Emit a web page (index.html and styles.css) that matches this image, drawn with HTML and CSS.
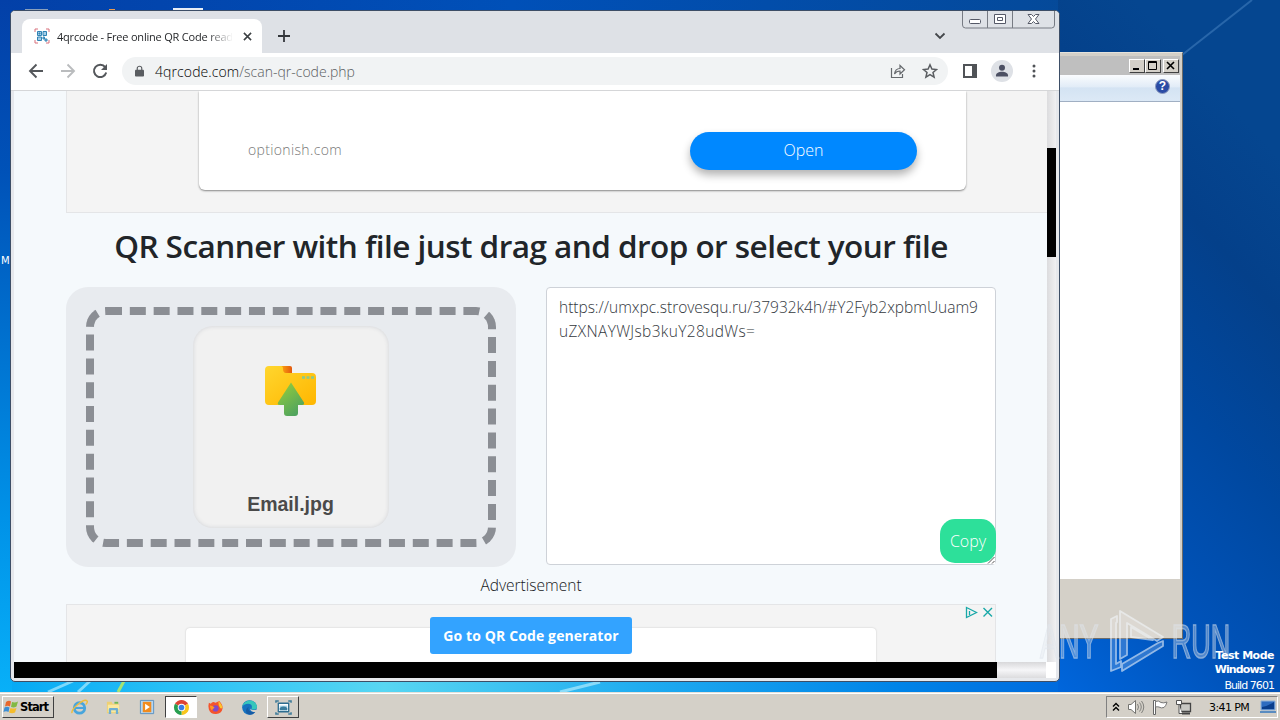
FILE: index.html
```
<!DOCTYPE html>
<html>
  <head>
    <meta charset="UTF-8" />
    <title>4qrcode</title>
    <link rel="stylesheet" href="styles.css">
  </head>
  <body>
    <div id="desktop">
      <svg class="wallpaper" viewBox="0 0 1280 720">
        <defs>
          <linearGradient id="floor">
            <stop offset="0" stop-color="#04a8f4" />
            <stop offset="0.15" stop-color="#2cc2f6" />
            <stop offset="0.3" stop-color="#58d6f2" />
            <stop offset="0.5" stop-color="#20acf0" />
            <stop offset="0.7" stop-color="#0084e8" />
            <stop offset="0.85" stop-color="#0066dc" />
            <stop offset="1" stop-color="#0050bc" />
          </linearGradient>
          <linearGradient id="left_side" x1="0" y1="0" x2="0" y2="1">
            <stop offset="0" stop-color="#0340a8" />
            <stop offset="0.25" stop-color="#0052b8" />
            <stop offset="0.5" stop-color="#0072d0" />
            <stop offset="0.75" stop-color="#0092e8" />
            <stop offset="1" stop-color="#08b0f8" />
          </linearGradient>
          <linearGradient id="top_side">
            <stop offset="0" stop-color="#0340a8" />
            <stop offset="0.4" stop-color="#0050b8" />
            <stop offset="0.8" stop-color="#044a9c" />
            <stop offset="1" stop-color="#0a4888" />
          </linearGradient>
          <linearGradient id="right_side" x1="0.35" y1="0" x2="0" y2="1">
            <stop offset="0" stop-color="#054690" />
            <stop offset="0.2" stop-color="#04408a" />
            <stop offset="0.45" stop-color="#0048a0" />
            <stop offset="0.75" stop-color="#0054bc" />
            <stop offset="1" stop-color="#0066dc" />
          </linearGradient>
        </defs>
        <rect width="1280" height="720" fill="url(#top_side)" />
        <rect y="600" width="1280" height="120" fill="url(#floor)" />
        <rect width="12" height="692" fill="url(#left_side)" />
        <rect x="1058" width="222" height="692" fill="url(#right_side)" />
        <path d="M1182 55L1252 0" stroke="#4b86c4" stroke-width="2" opacity="0.5" />
        <path d="M48 692l25-11M78 692l12-11M560 692l40-10" stroke="#c8f4ff" stroke-width="3" opacity="0.6" />
        <path d="M118 692l6-11" stroke="#a5e474" stroke-width="3" />
        <path d="M25 9.500h23" stroke="#8aa0bc" />
        <path d="M173 9h30" stroke="#e8eef6" stroke-width="2" />
        <path d="M109 9.500h6" stroke="#e89a50" />
      </svg>
      <div class="icon_label">M</div>

      <div class="window explorer">
        <div class="caption">
          <span class="caption_button"><svg viewBox="0 0 14 12"><path d="M3 9h6" stroke="#000" stroke-width="2" /></svg></span>
          <span class="caption_button"><svg viewBox="0 0 14 12"><path d="M2.500 1.500h8v8h-8zM2 2.500h9" fill="none" stroke="#000" /></svg></span>
          <span class="caption_button close"><svg viewBox="0 0 14 12"><path d="M3 2l7 7M10 2l-7 7" stroke="#000" stroke-width="1.600" /></svg></span>
        </div>
        <div class="commands"><span class="help">?</span></div>
        <div class="files"></div>
        <div class="details"></div>
      </div>

      <div class="window chrome">
        <div class="tabs">
          <div class="tab">
            <svg class="favicon" viewBox="0 0 16 16">
              <path d="M1 4V1h3M12 1h3v3M15 12v3h-3M4 15H1v-3" fill="none" stroke="#d8707c" />
              <path d="M3.500 3.500h4v4h-4zM9 3.500h3.500v4H9zM3.500 9h4v3.500h-4zM9 9h1.500v2H9zM11 11h2v2h-2zM5 5h1v1H5z" fill="#a5cce6" stroke="#2f83b4" />
            </svg>
            <span class="tab_title">4qrcode - Free online QR Code read</span>
            <svg class="tab_close" viewBox="0 0 10 10"><path d="M1 1l8 8M9 1l-8 8" stroke="#3c4043" stroke-width="1.700" /></svg>
          </div>
          <svg class="new_tab" viewBox="0 0 12 12"><path d="M6 0v12M0 6h12" stroke="#33363a" stroke-width="1.800" /></svg>
          <svg class="tab_search" viewBox="0 0 12 8"><path d="M1.500 1.500L6 6l4.500-4.500" fill="none" stroke="#44474b" stroke-width="1.800" /></svg>
          <svg class="window_buttons" viewBox="0 0 94 18">
            <path d="M.5 0v14q0 3 3 3h86q3 0 3-3V0M25.500 0v17M50.500 0v17" fill="none" stroke="#777b83" />
            <rect x="7.500" y="8.500" width="11" height="4" rx="1" fill="#fff" stroke="#555967" />
            <path d="M32.500 3.500h11v9h-11zM35.500 6.500h5v3h-5z" fill="#fff" stroke="#555967" />
            <path d="M66 3.500h3.500l2 2 2-2H77l-3.500 4.500 3.500 4.500h-3.500l-2-2-2 2H66l3.500-4.500z" fill="#fff" stroke="#555967" />
          </svg>
        </div>
        <div class="toolbar">
          <svg class="nav" viewBox="0 0 16 16"><path d="M15 8H2M8.500 1.500L2 8l6.500 6.500" fill="none" stroke="#54575b" stroke-width="1.900" /></svg>
          <svg class="nav" viewBox="0 0 16 16"><path d="M1 8h13M7.500 1.500L14 8l-6.500 6.500" fill="none" stroke="#babcbe" stroke-width="1.900" /></svg>
          <svg class="nav" viewBox="0 0 16 16"><path d="M13.200 4.200A6.200 6.200 0 1 0 14.200 9.500" fill="none" stroke="#54575b" stroke-width="2" /><path d="M15 1v6H9z" fill="#54575b" /></svg>
          <div class="omnibox">
            <svg class="lock" viewBox="0 0 10 12"><path d="M1 4.500h8q1 0 1 1V11q0 1-1 1H1q-1 0-1-1V5.500q0-1 1-1z" fill="#5a5d61" /><path d="M2.500 5V3a2.500 2.300 0 0 1 5 0v2" fill="none" stroke="#5a5d61" stroke-width="1.300" /></svg>
            <span class="url"><span class="host">4qrcode.com</span>/scan-qr-code.php</span>
            <svg class="share" viewBox="0 0 16 16"><path d="M1.500 5v9.500h11V11M4.500 11c.5-4 2.500-5.500 5.500-5.500V2.500l4.500 4.300L10 11V8c-2.500 0-4 .5-5.500 3z" fill="none" stroke="#66696d" stroke-width="1.200" /></svg>
            <svg class="star" viewBox="0 0 16 16"><path d="M8 1.800l1.900 4.300 4.600.4-3.500 3 1.100 4.600L8 11.700l-4.100 2.400L5 9.500l-3.500-3 4.600-.4z" fill="none" stroke="#5a5d61" stroke-width="1.500" /></svg>
          </div>
          <svg class="panel_icon" viewBox="0 0 14 14"><path d="M1 1h12v12H1z" fill="none" stroke="#505357" stroke-width="2" /><path d="M9 1h4v12H9z" fill="#505357" /></svg>
          <svg class="avatar" viewBox="0 0 22 22"><circle cx="11" cy="11" r="11" fill="#dee1e6" /><circle cx="11" cy="7.800" r="3" fill="#4c5063" /><path d="M5 16.500v-1.300c0-2.200 3-3.500 6-3.500s6 1.300 6 3.500v1.300z" fill="#4c5063" /></svg>
          <svg class="dots" viewBox="0 0 4 14"><g fill="#505357"><circle cx="2" cy="2" r="1.500" /><circle cx="2" cy="7" r="1.500" /><circle cx="2" cy="12" r="1.500" /></g></svg>
        </div>
        <div class="viewport">
          <div class="page">
            <div class="ad top_ad">
              <div class="ad_card">
                <span class="ad_host">optionish.com</span>
                <span class="open_button">Open</span>
              </div>
            </div>
            <h2 class="heading">QR Scanner with file just drag and drop or select your file</h2>
            <div class="scanner">
              <div class="drop_area">
                <div class="drop_border">
                  <div class="file_card">
                    <svg class="folder" viewBox="0 0 52 52">
                      <defs>
                        <linearGradient id="folder_fill" x1="0" y1="0" x2="1" y2="1">
                          <stop offset="0" stop-color="#ffd62e" />
                          <stop offset="1" stop-color="#ffb600" />
                        </linearGradient>
                        <linearGradient id="tab_fill">
                          <stop offset="0" stop-color="#ffab10" />
                          <stop offset="1" stop-color="#e2580e" />
                        </linearGradient>
                        <linearGradient id="arrow_fill" x1="0" y1="0" x2="0.6" y2="1">
                          <stop offset="0" stop-color="#9ad038" />
                          <stop offset="1" stop-color="#50a45e" />
                        </linearGradient>
                      </defs>
                      <path d="M15 1h10q2 0 2 2v6H15z" fill="url(#tab_fill)" />
                      <path d="M4 1h12q2 0 2 3 0 4 3 4h26q4 0 4 4v24q0 4-4 4H4q-4 0-4-4V5q0-4 4-4z" fill="url(#folder_fill)" />
                      <path d="M37 12.500h3M41.500 12.500h3M46 12.500h3" stroke="#8bc98c" stroke-width="2.500" />
                      <path d="M26 17.500l13 20q.5 2.500-2 2.500h-4v8q0 3-3 3h-8q-3 0-3-3v-8h-4q-3 0-2-2.500z" fill="url(#arrow_fill)" />
                    </svg>
                    <span class="file_name">Email.jpg</span>
                  </div>
                </div>
              </div>
              <div class="result">
                <div class="result_text">https://umxpc.strovesqu.ru/37932k4h/#Y2Fyb2xpbmUuam9<br><span class="second_line">uZXNAYWJsb3kuY28udWs=</span></div>
                <span class="copy_button">Copy</span>
                <svg class="grip" viewBox="0 0 8 8"><path d="M0 8h8V0z" fill="#fff" /><path d="M1 7.500L7.500 1M5 7.500L7.500 5" stroke="#555" /></svg>
              </div>
            </div>
            <div class="ad_label">Advertisement</div>
            <div class="ad bottom_ad">
              <div class="ad_card"></div>
              <svg class="ad_choices" viewBox="0 0 30 14">
                <path d="M1.500 2.500l10 5-10 5zM4.500 6v4" fill="none" stroke="#18a8a8" stroke-width="1.300" />
                <path d="M18.500 3l8.500 8.500M27 3l-8.500 8.500" stroke="#18a8a8" stroke-width="1.400" />
              </svg>
            </div>
            <span class="generator_button">Go to QR Code generator</span>
          </div>
          <div class="scroll_y"><div class="thumb"></div></div>
        </div>
        <div class="scroll_x"><div class="thumb"></div><div class="corner"></div></div>
      </div>

      <svg class="watermark" viewBox="0 0 200 78">
        <text x="2" y="58" textLength="77" lengthAdjust="spacingAndGlyphs" transform="translate(0.500 0) scale(0.76 1)">ANY</text>
        <text x="176" y="58" textLength="77" lengthAdjust="spacingAndGlyphs" transform="scale(0.76 1)">RUN</text>
        <path d="M73 19l6-3v6l-1 1v41l5-3v6l-10 4z" />
        <path d="M82 11l43 26-6 4-30-18v32l-7 4zM93 37v-10l22 13z" />
        <path d="M84 71v-7l36-21 5-2v5z" />
      </svg>
      <div class="build">
        <b>Test Mode</b>
        <b class="system">Windows 7</b>
        <span>Build 7601</span>
      </div>

      <div class="taskbar">
        <div class="start">
          <svg viewBox="0 0 16 16"><path d="M3 3q3-2 5-.5L7 7.500Q4.500 6 2 7.500z" fill="#e8672c" /><path d="M9 3q3 1 6-.5L13.500 7.500Q11 9 8 8z" fill="#82b944" /><path d="M1.500 8.500q2.500-1.500 5 0L5.500 13Q3 11.500.5 13z" fill="#3c8ed4" /><path d="M7.500 9q3 1 6 0L12 13.500q-3 1.500-6 0z" fill="#f4bc2c" /></svg>
          <b>Start</b>
        </div>
        <div class="task">
          <svg viewBox="0 0 18 18"><circle cx="9" cy="9.500" r="5.500" fill="none" stroke="#48a5dc" stroke-width="3" /><path d="M4 9.500h11" stroke="#48a5dc" stroke-width="2.200" /><path d="M1 15C0 10 14-1 17 2q1 1-1.500 4" fill="none" stroke="#edbd3c" stroke-width="1.500" /></svg>
        </div>
        <div class="task">
          <svg viewBox="0 0 18 18"><path d="M2 3h5l1 2h7v10H2z" fill="#eed073" /><path d="M3 6h12v8H3z" fill="#fae9a0" /><path d="M4 16v-5q0-1.500 1.500-1.500h7Q14 9.500 14 11v5h-2.500v-4h-5v4z" fill="#6eaed3" /><path d="M10 4h4" stroke="#70b850" stroke-width="2" /></svg>
        </div>
        <div class="task">
          <svg viewBox="0 0 18 18"><path d="M1.500 1.500h14v14h-14z" fill="#b5d5ee" stroke="#5a90c0" /><path d="M4 3h9v11H4z" fill="#f18b1e" /><path d="M6.500 5l5 3.500-5 3.500z" fill="#fff" /></svg>
        </div>
        <div class="task active">
          <svg viewBox="0 0 18 18"><path d="M9 9L2.100 5A8 8 0 0 1 15.900 5z" fill="#dd4334" /><path d="M9 9l6.900-4A8 8 0 0 1 9 17z" fill="#f9c61d" /><path d="M9 9v8A8 8 0 0 1 2.100 5z" fill="#289f50" /><circle cx="9" cy="9" r="4" fill="#fff" /><circle cx="9" cy="9" r="3" fill="#397de5" /></svg>
        </div>
        <div class="task">
          <svg viewBox="0 0 18 18"><path d="M2 4l2 1q2-3 5-1l4-2q4 4 3.500 8A7.500 7 0 0 1 2 11q-1-4 0-7z" fill="#f5542c" /><path d="M12 2q4 4 4.500 7-2 3-4-2z" fill="#fdc42d" /><circle cx="9" cy="10" r="3.300" fill="#814bc8" /><path d="M3 7q3 0 5 2l-3 3q-2-2-2-5z" fill="#ff9824" /></svg>
        </div>
        <div class="task">
          <svg viewBox="0 0 18 18"><circle cx="9" cy="9" r="7.800" fill="#1672c0" /><path d="M1.500 8C3 0 15-1 17 8q0 4-6 3 2-6-3.500-6Q3.500 5 1.500 8z" fill="#37c6bb" /><path d="M8 8q-2 6 7 6-4 4-8 2-4-4 1-8z" fill="#155ba5" /><path d="M10 8q-2 4 6 3.500l2 1-2 1.500Q8 14 10 8z" fill="#d4d0c8" /></svg>
        </div>
        <div class="task raised">
          <svg viewBox="0 0 18 18"><path d="M3.500 4.500h11v9h-11z" fill="#fff" stroke="#2d6d90" stroke-width="1.400" /><path d="M5 7h8v5H5z" fill="#a5d2e8" /><path d="M5 12V9.500q4-3 8 0V12z" fill="#3a7c9c" /><path d="M1 4V2h3M14 2h3v2M17 14v2h-3M4 16H1v-2" fill="none" stroke="#3e7b99" stroke-width="1.600" /></svg>
        </div>
        <div class="tray">
          <svg class="chevrons" viewBox="0 0 8 10"><path d="M1 4.500l3-3 3 3M1 8.500l3-3 3 3" fill="none" stroke="#000" stroke-width="1.400" /></svg>
          <svg class="tray_icon" viewBox="0 0 18 16"><path d="M1.500 5.500H4L8.500 1.500v13L4 10.500H1.500z" fill="#fff" stroke="#73736f" /><path d="M10.500 5q2 3 0 6M12.500 3.500q3.500 4.500 0 9M14.500 2q4.500 6 0 12" fill="none" stroke="#80807c" /></svg>
          <svg class="tray_icon" viewBox="0 0 18 16"><path d="M2.500 1.500h2v14h-2z" fill="#fff" stroke="#666" /><path d="M4.500 2.500q3-1.500 5.500 1 2.500 1 6-.5-1 4-3 5.500-3 1-5-.5-2-.5-3.500 0z" fill="#fff" stroke="#777" /></svg>
          <svg class="tray_icon" viewBox="0 0 18 16"><path d="M5.500 4.500h10v8h-10z" fill="#c8c8c4" stroke="#444" stroke-width="1.300" /><path d="M7 14.500h8" stroke="#444" stroke-width="2" /><path d="M1.500 1.500h5v4h-5zM4 5.500v9h3" fill="#fff" stroke="#555" /></svg>
          <span class="clock">3:41 PM</span>
          <svg class="show_desktop" viewBox="0 0 16 14"><path d="M1 1h14v9H1z" fill="#2e6cc0" stroke="#8fb0d6" /><path d="M2 7q6-1 12-5v7H2z" fill="#0a3e8c" /><path d="M0 12h16" stroke="#5a8cc0" stroke-width="2" /></svg>
        </div>
      </div>
    </div>
  </body>
</html>
```
FILE: styles.css
```
body {
    margin: 0;
    font-family: "Open Sans", "Noto Sans", sans-serif;
}
#desktop {
    position: relative;
    width: 1280px;
    height: 720px;
    overflow: hidden;
}
svg { display: block; flex: none; }
.wallpaper { position: absolute; left: 0; top: 0; width: 1280px; height: 720px; }
.icon_label {
    position: absolute;
    left: 1px;
    top: 255px;
    color: white;
    font-family: "DejaVu Sans", sans-serif;
    font-size: 10px;
}

/* windows */
.window { position: absolute; box-sizing: border-box; display: flex; flex-direction: column; }
.explorer {
    left: 1050px;
    top: 52px;
    width: 133px;
    height: 587px;
    padding: 3px 2px 1px 0;
    background: #d4d0c8;
    border: 1px solid #6e6c68;
    border-top-color: #e4e2dc;
}
.caption {
    display: flex;
    align-items: center;
    justify-content: flex-end;
    height: 19px;
    padding-right: 1px;
    background: #bfbfbf;
}
.caption_button {
    box-sizing: border-box;
    width: 16px;
    height: 14px;
    border: 1px solid;
    border-color: #fff #404040 #404040 #fff;
    background: #d4d0c8;
}
.caption_button svg { width: 14px; height: 12px; }
.caption_button.close { margin-left: 2px; }
.commands {
    box-sizing: border-box;
    display: flex;
    justify-content: flex-end;
    height: 27px;
    padding: 4px 10px 0 0;
    background: linear-gradient(#fafcfe, #e2ecf7 45%, #d4e3f3 50%, #dce9f6);
    border-bottom: 1px solid #a0afc3;
}
.help {
    width: 13px;
    height: 13px;
    border: 1px solid #8b98bd;
    border-radius: 50%;
    background: #2a4ba5;
    color: white;
    font: bold 12px/13px "Liberation Sans", sans-serif;
    text-align: center;
}
.files { height: 477px; background: white; }
.details { flex: 1; }

.chrome {
    left: 10px;
    top: 10px;
    width: 1050px;
    height: 672px;
    padding: 0 3px 3px;
    background: #e6e8ec;
    border: 1px solid #3d4e66;
    border-radius: 5px;
    overflow: hidden;
}
.tabs {
    display: flex;
    align-items: center;
    height: 42px;
    margin: 0 -3px;
    padding-left: 11px;
    background: #dee1e6;
}
.tab {
    box-sizing: border-box;
    display: flex;
    align-items: center;
    align-self: flex-end;
    width: 240px;
    height: 34px;
    padding: 0 12px 0 12px;
    background: white;
    border-radius: 8px 8px 0 0;
}
.favicon { width: 16px; height: 16px; }
.tab_title {
    flex: 1;
    margin-left: 7px;
    white-space: nowrap;
    color: #26282b;
    font-size: 11px;
    letter-spacing: -0.2px;
    -webkit-mask-image: linear-gradient(to right, #000 85%, transparent);
}
.tab_close { width: 9px; height: 9px; margin-left: 10px; }
.new_tab { width: 12px; height: 12px; margin: 8px 0 0 16px; }
.tab_search { width: 12px; height: 8px; margin: 8px 16px 0 auto; }
.window_buttons { width: 94px; height: 18px; align-self: flex-start; margin-right: 3px; }
.toolbar {
    box-sizing: border-box;
    display: flex;
    align-items: center;
    height: 38px;
    margin: 0 -3px;
    padding: 0 20px 1px 17px;
    background: white;
    border-bottom: 1px solid #d5d6d8;
}
.nav { width: 16px; height: 16px; margin-right: 16px; }
.omnibox {
    box-sizing: border-box;
    flex: 1;
    display: flex;
    align-items: center;
    height: 28px;
    margin-left: -2px;
    padding: 0 10px 0 13px;
    background: #f1f3f4;
    border-radius: 14px;
}
.lock { width: 9px; height: 12px; }
.url {
    margin: 0 auto 0 11px;
    color: #5a5d61;
    font-size: 14px;
    font-weight: 300;
}
.host { color: #000; letter-spacing: 0.1px; }
.share { width: 16px; height: 16px; margin-right: 16px; }
.star { width: 16px; height: 16px; }
.panel_icon { width: 14px; height: 14px; margin-left: 15px; }
.avatar { width: 22px; height: 22px; margin-left: 14px; }
.dots { width: 4px; height: 14px; margin-left: 19px; margin-right: 3px; }
.viewport { display: flex; height: 571px; }
.page {
    position: relative;
    box-sizing: border-box;
    width: 1033px;
    height: 571px;
    padding-left: 52px;
    background: #f5f9fc;
    overflow: hidden;
}
.scroll_y { flex: 1; padding-top: 57px; background: linear-gradient(to right, #dcdcde, #f0f0f2); }
.scroll_y .thumb { width: 9px; height: 109px; background: black; }
.scroll_x { display: flex; height: 16px; background: linear-gradient(#d8d8da, #f6f6f8 50%, #dcdcde); }
.scroll_x .thumb { width: 983px; background: black; }
.scroll_x .corner { width: 10px; margin-left: auto; background: white; }

/* page content */
.ad { box-sizing: border-box; background: #f4f4f4; border: 1px solid #e4e5e7; }
.top_ad { height: 122px; padding-left: 132px; border-width: 0 0 1px 1px; }
.top_ad .ad_card {
    box-sizing: border-box;
    display: flex;
    align-items: center;
    justify-content: space-between;
    width: 767px;
    height: 99px;
    padding: 20px 49px 0;
    background: white;
    border-radius: 0 0 6px 6px;
    box-shadow: 0 1px 2px rgba(0, 0, 0, 0.45);
}
.ad_host { margin-top: -2px; color: #777; font-size: 14px; font-weight: 300; letter-spacing: 0.35px; }
.open_button {
    width: 227px;
    height: 38px;
    border-radius: 19px;
    background: #0088ff;
    box-shadow: 0 5px 9px rgba(0, 0, 0, 0.3);
    color: white;
    font-size: 16px;
    font-weight: 300;
    line-height: 37px;
    text-align: center;
}
.heading {
    width: 930px;
    height: 74px;
    margin: 0;
    color: #212529;
    font-size: 31.5px;
    font-weight: 600;
    line-height: 65px;
    letter-spacing: -0.54px;
    text-align: center;
    white-space: nowrap;
}
.scanner { display: flex; gap: 30px; width: 930px; height: 280px; }
.drop_area {
    box-sizing: border-box;
    width: 450px;
    height: 280px;
    padding: 20px;
    background: #e8ebef;
    border-radius: 22px;
}
.drop_border {
    box-sizing: border-box;
    display: flex;
    justify-content: center;
    height: 240px;
    padding: 11px 1px 0 0;
    border: 8px dashed #8b8e94;
    border-radius: 20px;
}
.file_card {
    box-sizing: border-box;
    display: flex;
    flex-direction: column;
    align-items: center;
    justify-content: space-between;
    width: 196px;
    height: 202px;
    padding: 39px 0 12px;
    background: #f1f1f1;
    border-radius: 20px;
    box-shadow: inset 0 0 4px #cfd1d5;
}
.folder { width: 52px; height: 52px; }
.file_name {
    color: #4a4a4a;
    font: bold 19.5px/24px "Liberation Sans", sans-serif;
}
.result {
    position: relative;
    box-sizing: border-box;
    width: 450px;
    height: 278px;
    padding: 7px 12px;
    background: white;
    border: 1px solid #ced2d8;
    border-radius: 4px;
}
.result_text {
    color: #33383d;
    font-size: 15.5px;
    font-weight: 300;
    line-height: 24px;
    letter-spacing: -0.02px;
    white-space: nowrap;
}
.second_line { letter-spacing: 0.35px; }
.copy_button {
    position: absolute;
    right: -1px;
    bottom: 1px;
    width: 56px;
    height: 44px;
    border-radius: 15px;
    background: #2de09a;
    color: white;
    font-size: 16px;
    font-weight: 300;
    line-height: 45px;
    text-align: center;
}
.grip { position: absolute; right: 0; bottom: 0; width: 8px; height: 8px; }
.ad_label {
    width: 930px;
    height: 37px;
    color: #15181b;
    font-size: 15.5px;
    font-weight: 300;
    line-height: 37px;
    text-align: center;
}
.bottom_ad { position: relative; width: 930px; height: 70px; padding: 23px 119px 0; }
.bottom_ad .ad_card {
    height: 60px;
    background: white;
    border-radius: 4px;
    box-shadow: 0 0 2px rgba(0, 0, 0, 0.2);
}
.ad_choices { position: absolute; right: 0; top: 0; width: 30px; height: 14px; }
.generator_button {
    position: absolute;
    left: 416px;
    top: 526px;
    width: 202px;
    height: 37px;
    border-radius: 3px;
    background: #33a3ff;
    color: white;
    font-size: 14px;
    font-weight: 700;
    line-height: 37px;
    letter-spacing: 0.12px;
    text-align: center;
    white-space: nowrap;
}

/* desktop overlays */
.watermark { position: absolute; left: 1038px; top: 600px; width: 200px; height: 78px; opacity: 0.6; }
.watermark text {
    fill: rgba(225, 230, 236, 0.6);
    stroke: #dfe5ec;
    stroke-width: 1.5;
    font-family: "Liberation Sans Narrow", "Liberation Sans", sans-serif;
    font-size: 49px;
}
.watermark path {
    fill: rgba(255, 255, 255, 0.3);
    stroke: #f4f8fc;
    stroke-width: 1.8;
    stroke-linejoin: round;
}
.build {
    position: absolute;
    right: 6px;
    top: 649px;
    display: flex;
    flex-direction: column;
    align-items: flex-end;
    color: white;
    font: 11px/14px "DejaVu Sans", sans-serif;
    letter-spacing: -0.5px;
}
.build .system { letter-spacing: -0.9px; }
.build span { margin-top: 2px; letter-spacing: -0.95px; }

/* taskbar */
.taskbar {
    position: absolute;
    left: 0;
    top: 692px;
    box-sizing: border-box;
    display: flex;
    align-items: center;
    width: 1280px;
    height: 28px;
    padding: 1px 2px 0;
    background: #d4d0c8;
    border-top: 1px solid #e4e1da;
    box-shadow: inset 0 1px white;
}
.start {
    box-sizing: border-box;
    display: flex;
    align-items: center;
    width: 52px;
    height: 22px;
    margin-right: 9px;
    border: 1px solid;
    border-color: white #404040 #404040 white;
    font: 11.5px "DejaVu Sans", sans-serif;
    letter-spacing: -0.9px;
}
.start svg { width: 16px; height: 16px; margin-right: 1px; }
.task {
    box-sizing: border-box;
    display: flex;
    align-items: center;
    justify-content: center;
    width: 32px;
    height: 22px;
    margin-right: 2px;
}
.task svg { width: 17px; height: 17px; }
.task.active { background: white; border: 1px solid; border-color: #404040 white white #404040; }
.task.raised { border: 1px solid; border-color: white #404040 #404040 white; }
.tray {
    box-sizing: border-box;
    display: flex;
    align-items: center;
    width: 172px;
    height: 22px;
    margin-left: auto;
    padding-left: 5px;
    border: 1px solid;
    border-color: #808080 white white #808080;
}
.chevrons { width: 8px; height: 10px; }
.tray_icon { width: 18px; height: 16px; margin-left: 7px; }
.tray_icon + .tray_icon { margin-left: 6px; }
.clock {
    margin-left: 16px;
    font: 11px "DejaVu Sans", sans-serif;
    letter-spacing: -0.6px;
    white-space: nowrap;
}
.show_desktop { width: 16px; height: 14px; margin-left: auto; margin-right: 1px; }
```
